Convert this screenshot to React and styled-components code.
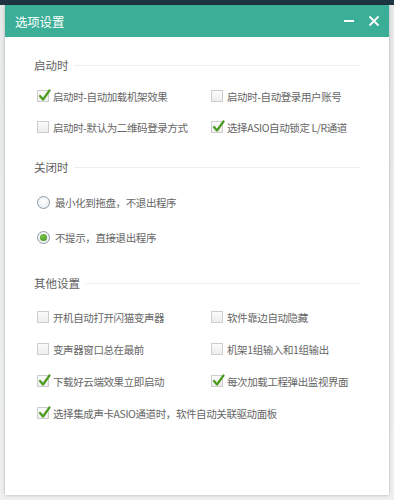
import styled, { createGlobalStyle } from 'styled-components'

const GlobalStyle = createGlobalStyle`
  html, body {
    margin: 0;
    padding: 0;
  }
  body {
    width: 394px;
    height: 500px;
    overflow: hidden;
    font-family: "Noto Sans CJK SC", "Noto Sans", sans-serif;
    background: linear-gradient(180deg, #1f3442 0, #1f3442 5px, #e6e9e9 5px, #eef0f0 100%);
  }
`

const Page = styled.div`
  box-sizing: border-box;
  width: 394px;
  height: 500px;
  padding: 5px;
`

const Dialog = styled.div`
  width: 384px;
  height: 490px;
  background: #fff;
  box-shadow: 0 0 3px rgba(0, 0, 0, 0.25);
  display: flex;
  flex-direction: column;
`

const TitleBar = styled.div`
  height: 32px;
  background: #3aae96;
  display: flex;
  align-items: center;
  padding: 0 3px 0 10px;
  color: #fff;
`

const Title = styled.div`
  flex: 1;
  font-size: 12.5px;
  letter-spacing: -0.2px;
`

const WinButton = styled.div`
  width: 24px;
  height: 24px;
  display: flex;
  align-items: center;
  justify-content: center;
  margin-left: 1px;
`

const Body = styled.div`
  padding: 20px 0 0 29px;
`

const Section = styled.div`
  margin-top: ${p => p.$top || 0}px;
`

const SectionHead = styled.div`
  display: flex;
  align-items: center;
  height: 16px;
  font-size: 11.5px;
  color: #5e5e5e;
  padding-right: 29px;

  &::after {
    content: '';
    flex: 1;
    height: 1px;
    background: #efefef;
    margin-left: 5px;
    margin-top: 1px;
  }
`

const Grid = styled.div`
  display: grid;
  grid-template-columns: 174px 1fr;
  row-gap: ${p => p.$gap}px;
  margin-top: ${p => p.$top}px;
  padding-left: 3px;
`

const Item = styled.label`
  display: flex;
  align-items: center;
  height: 24px;
  font-size: 10.5px;
  letter-spacing: -0.4px;
  color: #666;
  white-space: nowrap;
  grid-column: ${p => (p.$wide ? '1 / span 2' : 'auto')};
`

const Box = styled.span`
  position: relative;
  box-sizing: border-box;
  width: 12px;
  height: 12px;
  border: 1px solid #cdcdcd;
  background: linear-gradient(180deg, #fbfbfb, #ededed);
  margin-right: 4px;
  flex: none;

  svg {
    position: absolute;
    left: 0;
    top: -3px;
  }
`

const Radio = styled.span`
  box-sizing: border-box;
  width: 13px;
  height: 13px;
  border-radius: 50%;
  border: 1px solid #8d9aa8;
  background: radial-gradient(circle at 50% 40%, #ffffff, #e4e9ef);
  margin-right: 5px;
  flex: none;
  display: flex;
  align-items: center;
  justify-content: center;

  &::after {
    content: '';
    display: ${p => (p.$on ? 'block' : 'none')};
    width: 7px;
    height: 7px;
    border-radius: 50%;
    background: radial-gradient(circle at 40% 35%, #7cc34a, #3f8f18);
  }
`

function Check({ on, children, wide }) {
  return (
    <Item $wide={wide}>
      <Box>
        {on && (
          <svg width="13" height="14" viewBox="0 0 13 14">
            <path d="M2 8 L5 11.5 L11.5 2.5" fill="none" stroke="#4b9c1e" strokeWidth="2.2" strokeLinecap="round" strokeLinejoin="round" />
          </svg>
        )}
      </Box>
      {children}
    </Item>
  )
}

function Option({ on, children }) {
  return (
    <Item $wide>
      <Radio $on={on} />
      {children}
    </Item>
  )
}

export default function App() {
  return (
    <Page>
      <GlobalStyle />
      <Dialog>
        <TitleBar>
          <Title>选项设置</Title>
          <WinButton>
            <svg width="12" height="12" viewBox="0 0 12 12">
              <path d="M1 6 H11" stroke="#fff" strokeWidth="2" />
            </svg>
          </WinButton>
          <WinButton>
            <svg width="12" height="12" viewBox="0 0 12 12">
              <path d="M1.5 1.5 L10.5 10.5 M10.5 1.5 L1.5 10.5" stroke="#fff" strokeWidth="1.8" />
            </svg>
          </WinButton>
        </TitleBar>
        <Body>
          <Section>
            <SectionHead>启动时</SectionHead>
            <Grid $top={11} $gap={7}>
              <Check on>启动时-自动加载机架效果</Check>
              <Check>启动时-自动登录用户账号</Check>
              <Check>启动时-默认为二维码登录方式</Check>
              <Check on>选择ASIO自动锁定 L/R通道</Check>
            </Grid>
          </Section>
          <Section $top={20}>
            <SectionHead>关闭时</SectionHead>
            <Grid $top={15} $gap={11}>
              <Option>最小化到拖盘，不退出程序</Option>
              <Option on>不提示，直接退出程序</Option>
            </Grid>
          </Section>
          <Section $top={26}>
            <SectionHead>其他设置</SectionHead>
            <Grid $top={14} $gap={8}>
              <Check>开机自动打开闪猫变声器</Check>
              <Check>软件靠边自动隐藏</Check>
              <Check>变声器窗口总在最前</Check>
              <Check>机架1组输入和1组输出</Check>
              <Check on>下载好云端效果立即启动</Check>
              <Check on>每次加载工程弹出监视界面</Check>
              <Check on wide>选择集成声卡ASIO通道时，软件自动关联驱动面板</Check>
            </Grid>
          </Section>
        </Body>
      </Dialog>
    </Page>
  )
}
